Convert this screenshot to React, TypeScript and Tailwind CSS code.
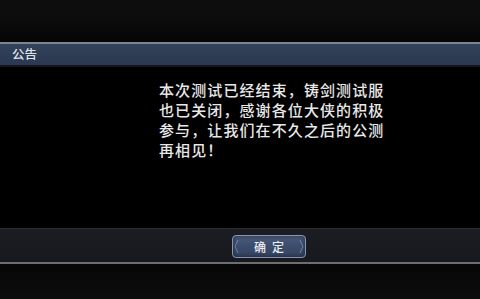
import React from "react";

export default function App() {
  const lines = [
    "本次测试已经结束，铸剑测试服",
    "也已关闭，感谢各位大侠的积极",
    "参与，让我们在不久之后的公测",
    "再相见！",
  ];
  return (
    <div
      className="w-[480px] h-[299px] overflow-hidden flex flex-col bg-[#0c0c0c]"
      style={{ fontFamily: '"Noto Sans CJK SC", sans-serif' }}
    >
      <div className="h-[42px] bg-gradient-to-b from-[#0d0d0d] via-[#0c0c0c] to-[#050505]" />
      <div className="h-[2px] bg-[#7d8591]" />
      <div className="h-[21px] bg-gradient-to-b from-[#33415a] to-[#2b3850] flex items-center px-[12px]">
        <span className="text-[12.5px] leading-none font-medium text-[#dfe3ea]">公告</span>
      </div>
      <div className="h-[2px] bg-[#12161f]" />
      <div className="h-[161px] bg-black flex">
        <div className="pt-[13px] ml-[159px] flex flex-col items-start">
          {lines.map((l) => (
            <div key={l} className="text-[15px] leading-[20px] font-medium text-[#e8e8e8] tracking-[1.1px] whitespace-nowrap">
              {l}
            </div>
          ))}
        </div>
      </div>
      <div className="h-[1px] bg-[#2b2c31]" />
      <div className="h-[33px] bg-gradient-to-b from-[#1c1d22] to-[#18191e] flex items-center justify-center">
        <div className="relative w-[74px] h-[23px] rounded-[4px] border border-[#8796b3] bg-gradient-to-b from-[#4a5b7c] via-[#3c4c6b] to-[#34435f] flex items-center justify-center mt-[2px] ml-[58px] shadow-[inset_0_0_4px_rgba(0,0,0,0.5)]">
          <svg className="absolute left-[1px] top-[4px]" width="5" height="13" viewBox="0 0 5 13">
            <path d="M4 0 L1 6.5 L4 13" stroke="#6f82a6" strokeWidth="1" fill="none" />
          </svg>
          <svg className="absolute right-[1px] top-[4px]" width="5" height="13" viewBox="0 0 5 13">
            <path d="M1 0 L4 6.5 L1 13" stroke="#6f82a6" strokeWidth="1" fill="none" />
          </svg>
          <span className="text-[12px] leading-none font-medium text-[#e8ebf0] tracking-[6px] pl-[6px]">确定</span>
        </div>
      </div>
      <div className="h-[2px] bg-[#6c6e74]" />
      <div className="flex-1 bg-gradient-to-b from-[#070707] to-[#0c0c0c]" />
    </div>
  );
}
